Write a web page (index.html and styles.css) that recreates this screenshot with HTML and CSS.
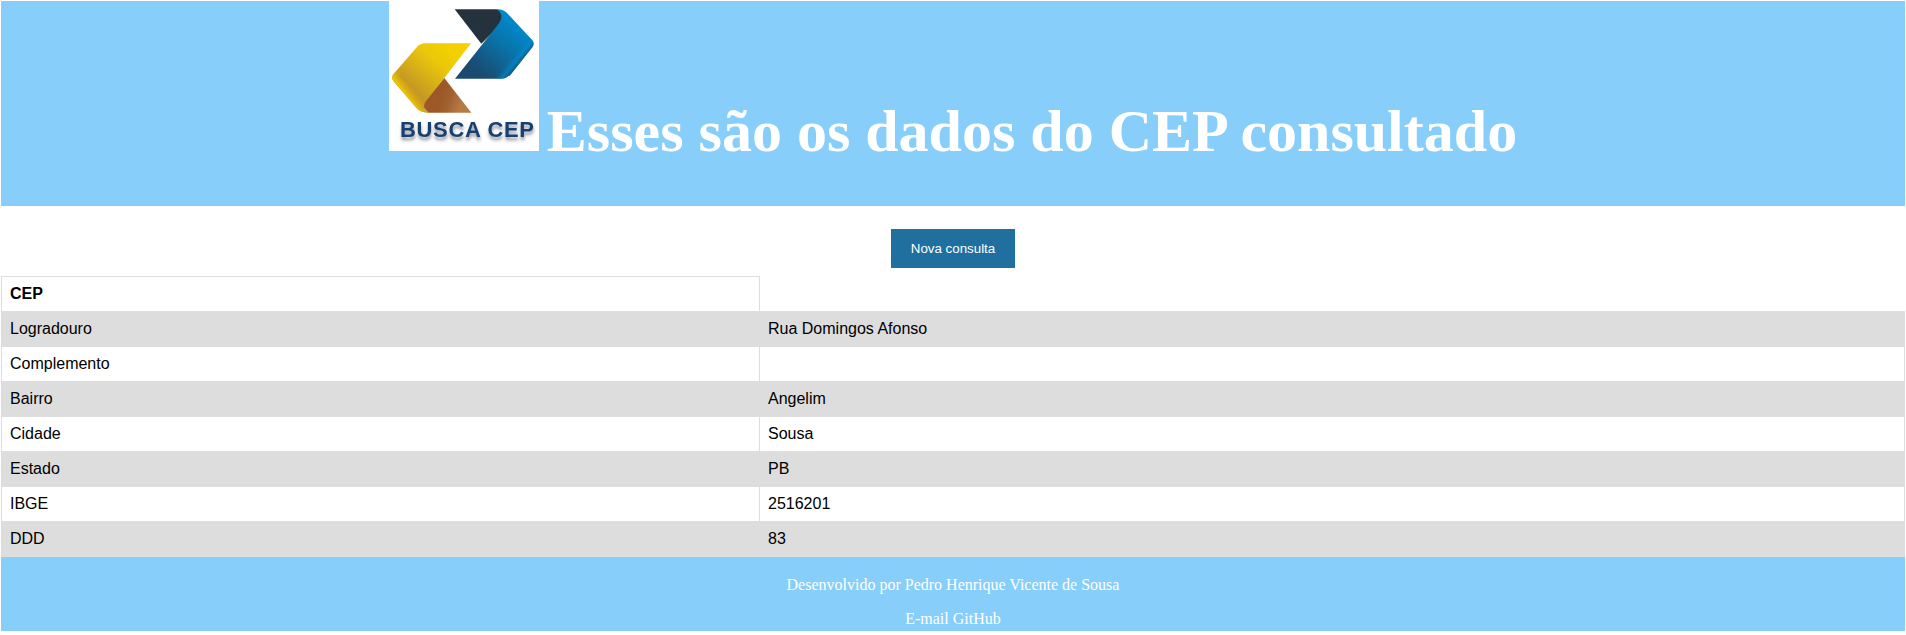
FILE: index.html
```html
<!DOCTYPE html>
<html lang="pt-BR">
<head>
<meta charset="utf-8">
<title>Busca CEP</title>
<link rel="stylesheet" href="styles.css">
</head>
<body>
<header class="header">
<h1 class="title"><svg class="logo" viewBox="0 0 450 450" role="img" aria-label="Busca CEP">
<defs>
<linearGradient id="gold" gradientUnits="userSpaceOnUse" x1="190" y1="150" x2="70" y2="290"><stop offset="0" stop-color="#f4d000"/><stop offset=".3" stop-color="#eac70a"/><stop offset="1" stop-color="#bd8f29"/></linearGradient>
<linearGradient id="goldEdge" gradientUnits="userSpaceOnUse" x1="42" y1="268" x2="68" y2="248"><stop offset="0" stop-color="#f0c800" stop-opacity=".9"/><stop offset="1" stop-color="#d9a91c" stop-opacity="0"/></linearGradient>
<linearGradient id="blue" gradientUnits="userSpaceOnUse" x1="390" y1="75" x2="270" y2="215"><stop offset="0" stop-color="#0088cb"/><stop offset=".35" stop-color="#0876ad"/><stop offset="1" stop-color="#1b4a70"/></linearGradient>
<linearGradient id="blueEdge" gradientUnits="userSpaceOnUse" x1="376" y1="154" x2="406" y2="178"><stop offset="0" stop-color="#0077b5" stop-opacity="0"/><stop offset=".5" stop-color="#008bd0"/><stop offset="1" stop-color="#173f68"/></linearGradient>
<linearGradient id="brown" gradientUnits="userSpaceOnUse" x1="150" y1="290" x2="215" y2="315"><stop offset="0" stop-color="#9c5826"/><stop offset=".45" stop-color="#a0602f"/><stop offset="1" stop-color="#b67a43"/></linearGradient>
<filter id="shadow" x="-10%" y="-20%" width="120%" height="160%"><feDropShadow dx="1" dy="10" stdDeviation="4" flood-color="#334" flood-opacity=".5"/></filter>
</defs>
<rect width="450" height="450" fill="#fff"/>
<path d="M197 25H322L345 32V60L277 128Z" fill="#24323d"/>
<path d="M322 25Q345 24 357 39L430 118Q438 128 430 139L367 218Q355 232 338 233H198L326 72Q350 42 322 25Z" fill="url(#blue)"/>
<path d="M322 25Q345 24 357 39L430 118Q438 128 430 139L367 218Q355 232 338 233H290L386 110Z" fill="url(#blueEdge)" opacity=".65"/>
<path d="M166 231L247 335H118L100 315L111 296Z" fill="url(#brown)"/>
<path d="M246 127H108Q94 127 84 138L13 220Q6 230 13 240L85 324Q95 335 122 335Q96 325 109 303L166 231Z" fill="url(#gold)"/>
<path d="M84 138L13 220Q6 230 13 240L85 324Q95 335 122 335Q96 325 109 303L30 226L108 127Q94 127 84 138Z" fill="url(#goldEdge)"/>
<text class="logo-text" x="33" y="407" textLength="402" lengthAdjust="spacing" filter="url(#shadow)">BUSCA CEP</text>
</svg> <span class="title-text">Esses são os dados do CEP consultado</span></h1>
</header>
<main>
<div class="actions"><button class="button" type="button">Nova consulta</button></div>
<table class="table">
<colgroup><col class="label-column"><col></colgroup>
<tr><th>CEP</th></tr>
<tr><td>Logradouro</td><td>Rua Domingos Afonso</td></tr>
<tr><td>Complemento</td><td></td></tr>
<tr><td>Bairro</td><td>Angelim</td></tr>
<tr><td>Cidade</td><td>Sousa</td></tr>
<tr><td>Estado</td><td>PB</td></tr>
<tr><td>IBGE</td><td>2516201</td></tr>
<tr><td>DDD</td><td>83</td></tr>
</table>
</main>
<footer class="footer">
<p class="credit">Desenvolvido por Pedro Henrique Vicente de Sousa</p>
<a class="link">E-mail</a> <a class="link">GitHub</a>
</footer>
</body>
</html>
```
FILE: styles.css
```css
body {
  margin: 1px;
  background: #fff;
  font-family: "Liberation Serif", "Times New Roman", serif;
  font-size: 16px;
}
.header {
  display: flow-root;
  box-sizing: border-box;
  height: 205px;
  background: #87cefa;
  color: #fff;
  text-align: center;
}
.title {
  margin: 0;
  font-size: 32px;
  font-weight: bold;
}
.title-text {
  font-size: 60px;
}
.logo {
  width: 150px;
  height: 150px;
}
.logo-text {
  font: bold 66px "Liberation Sans", Arial, sans-serif;
  fill: #17406f;
}
.actions {
  padding: 23px 0 8px;
  display: flex;
  justify-content: center;
}
.button {
  padding: 12px 20px;
  border: 0;
  background: #1f6f9f;
  color: #fff;
  font: 13.333px "Liberation Sans", Arial, sans-serif;
}
.table {
  width: 100%;
  border-collapse: collapse;
  table-layout: fixed;
  font-family: "Liberation Sans", Arial, sans-serif;
}
.label-column {
  width: 758px;
}
.table th,
.table td {
  height: 18px;
  padding: 8px;
  border: 1px solid #ddd;
  text-align: left;
}
.table tr:nth-child(even) {
  background: #ddd;
}
.footer {
  display: flow-root;
  box-sizing: border-box;
  height: 74px;
  background: #87cefa;
  color: #fff;
  text-align: center;
}
.credit {
  margin: 19px 0 16px;
}
```
